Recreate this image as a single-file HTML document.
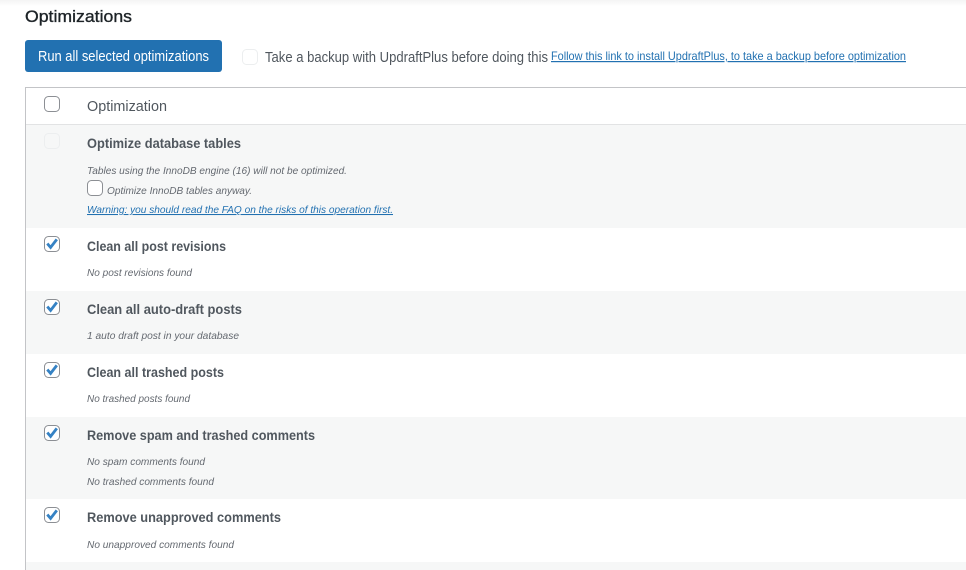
<!DOCTYPE html>
<html><head><meta charset="utf-8"><style>
html,body{margin:0;padding:0;width:966px;height:570px;overflow:hidden;background:#fff}
svg{display:block}
text{font-family:"Liberation Sans",sans-serif;fill:#50575e}
.t{font-weight:bold;font-size:13.5px;fill:#50575e}
.s{font-style:italic;font-size:10.5px;fill:#646970}
.l{fill:#2271b1;text-decoration:underline}
</style></head><body>
<svg width="966" height="570" viewBox="0 0 966 570" xmlns="http://www.w3.org/2000/svg">
<defs><linearGradient id="g" x1="0" y1="0" x2="0" y2="1"><stop offset="0" stop-color="#f4f4f4"/><stop offset="1" stop-color="#fff"/></linearGradient></defs>
<rect width="966" height="570" fill="#fff"/>
<rect width="966" height="6" fill="url(#g)"/>
<text x="25" y="22" font-size="17" textLength="107" lengthAdjust="spacingAndGlyphs" style="fill:#1d2327" stroke="#1d2327" stroke-width=".35">Optimizations</text>
<rect x="25" y="40" width="197" height="32" rx="3" fill="#2271b1"/>
<text x="38" y="61" font-size="14.5" textLength="171" lengthAdjust="spacingAndGlyphs" style="fill:#fff">Run all selected optimizations</text>
<rect x="242.5" y="49.5" width="15" height="15" rx="4" fill="#fff" stroke="#eceeef"/>
<text x="265" y="62" font-size="14.5" textLength="283" lengthAdjust="spacingAndGlyphs">Take a backup with UpdraftPlus before doing this</text>
<text x="551" y="60" font-size="12" class="l" textLength="355" lengthAdjust="spacingAndGlyphs">Follow this link to install UpdraftPlus, to take a backup before optimization</text>

<rect x="25" y="125" width="941" height="103" fill="#f6f7f7"/>
<rect x="25" y="291" width="941" height="63" fill="#f6f7f7"/>
<rect x="25" y="417" width="941" height="82" fill="#f6f7f7"/>
<rect x="25" y="562" width="941" height="8" fill="#f6f7f7"/>
<rect x="25" y="87" width="941" height="1" fill="#c3c4c7"/>
<rect x="25" y="87" width="1" height="483" fill="#c3c4c7"/>
<rect x="26" y="124" width="940" height="1" fill="#e2e3e4"/>

<rect x="44.5" y="96.5" width="15" height="15" rx="4" fill="#fff" stroke="#8c8f94"/>
<text x="87" y="111" font-size="14.5" textLength="80" lengthAdjust="spacingAndGlyphs">Optimization</text>

<rect x="44.5" y="133.5" width="15" height="15" rx="4" fill="#f6f7f7" stroke="#eceeef"/>
<text x="87" y="148" class="t" textLength="154" lengthAdjust="spacingAndGlyphs">Optimize database tables</text>
<text x="87" y="174" class="s" textLength="260" lengthAdjust="spacingAndGlyphs">Tables using the InnoDB engine (16) will not be optimized.</text>
<rect x="87.5" y="180.5" width="15" height="15" rx="4" fill="#fff" stroke="#8c8f94"/>
<text x="107" y="194" class="s" textLength="145" lengthAdjust="spacingAndGlyphs">Optimize InnoDB tables anyway.</text>
<text x="87" y="213" class="s l" textLength="306" lengthAdjust="spacingAndGlyphs" style="fill:#2271b1">Warning: you should read the FAQ on the risks of this operation first.</text>

<g>
<rect x="44.5" y="236.5" width="15" height="15" rx="4" fill="#fff" stroke="#8c8f94"/>
<path d="M47.3 243.6l3.3 3.8 6.2-8" fill="none" stroke="#3582c4" stroke-width="2.8"/>
</g>
<g transform="translate(0,63)"><rect x="44.5" y="236.5" width="15" height="15" rx="4" fill="#fff" stroke="#8c8f94"/><path d="M47.3 243.6l3.3 3.8 6.2-8" fill="none" stroke="#3582c4" stroke-width="2.8"/></g>
<g transform="translate(0,126)"><rect x="44.5" y="236.5" width="15" height="15" rx="4" fill="#fff" stroke="#8c8f94"/><path d="M47.3 243.6l3.3 3.8 6.2-8" fill="none" stroke="#3582c4" stroke-width="2.8"/></g>
<g transform="translate(0,189)"><rect x="44.5" y="236.5" width="15" height="15" rx="4" fill="#fff" stroke="#8c8f94"/><path d="M47.3 243.6l3.3 3.8 6.2-8" fill="none" stroke="#3582c4" stroke-width="2.8"/></g>
<g transform="translate(0,271)"><rect x="44.5" y="236.5" width="15" height="15" rx="4" fill="#fff" stroke="#8c8f94"/><path d="M47.3 243.6l3.3 3.8 6.2-8" fill="none" stroke="#3582c4" stroke-width="2.8"/></g>

<text x="87" y="251" class="t" textLength="139" lengthAdjust="spacingAndGlyphs">Clean all post revisions</text>
<text x="87" y="276" class="s" textLength="105" lengthAdjust="spacingAndGlyphs">No post revisions found</text>
<text x="87" y="314" class="t" textLength="155" lengthAdjust="spacingAndGlyphs">Clean all auto-draft posts</text>
<text x="87" y="339" class="s" textLength="152" lengthAdjust="spacingAndGlyphs">1 auto draft post in your database</text>
<text x="87" y="377" class="t" textLength="137" lengthAdjust="spacingAndGlyphs">Clean all trashed posts</text>
<text x="87" y="402" class="s" textLength="103" lengthAdjust="spacingAndGlyphs">No trashed posts found</text>
<text x="87" y="440" class="t" textLength="228" lengthAdjust="spacingAndGlyphs">Remove spam and trashed comments</text>
<text x="87" y="465" class="s" textLength="118" lengthAdjust="spacingAndGlyphs">No spam comments found</text>
<text x="87" y="485" class="s" textLength="127" lengthAdjust="spacingAndGlyphs">No trashed comments found</text>
<text x="87" y="522" class="t" textLength="194" lengthAdjust="spacingAndGlyphs">Remove unapproved comments</text>
<text x="87" y="548" class="s" textLength="147" lengthAdjust="spacingAndGlyphs">No unapproved comments found</text>
</svg>
</body></html>
